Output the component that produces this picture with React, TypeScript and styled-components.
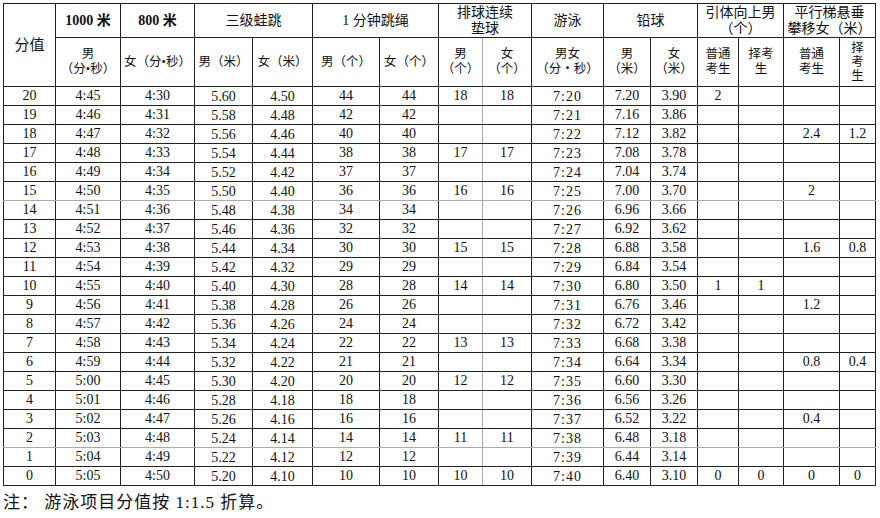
import React from "react";
import styled, { createGlobalStyle } from "styled-components";

const GlobalStyle = createGlobalStyle`
  html, body { margin: 0; padding: 0; background: #fff; }
  body { font-family: "Liberation Serif", "Noto Sans CJK SC", serif; color: #111; }
`;

const Page = styled.div`
  padding: 3px 0 0 3px;
  width: 880px;
  box-sizing: border-box;
`;

const Table = styled.table`
  border-collapse: collapse;
  table-layout: fixed;
  width: 872px;
  border-top: 1px solid #888;
  border-left: 1px solid #777;
  border-right: 1px solid #444;
`;

const HeadRow = styled.tr<{ $h: number }>`
  height: ${(p) => p.$h}px;
`;

const HeadCell = styled.th<{ $size?: number; $bold?: boolean; $lh?: number; $grayRight?: boolean }>`
  border: 1px solid #222;
  ${(p) => (p.$grayRight ? "border-right-color: #aaa;" : "")}
  padding: 0;
  font-size: ${(p) => p.$size ?? 14}px;
  font-weight: ${(p) => (p.$bold ? 700 : 400)};
  line-height: ${(p) => p.$lh ?? 15}px;
  text-align: center;
  vertical-align: middle;
  white-space: pre-line;
  font-family: "Liberation Serif", "Noto Sans CJK SC", serif;
`;

const DataRow = styled.tr<{ $gray?: boolean }>`
  height: 18.76px;
  & > td {
    border-bottom-color: ${(p) => (p.$gray ? "#aaa" : "#222")};
  }
`;

const Cell = styled.td<{ $low?: boolean; $spaced?: boolean; $grayRight?: boolean }>`
  border: 1px solid #222;
  ${(p) => (p.$grayRight ? "border-right-color: #aaa !important;" : "")}
  padding: ${(p) => (p.$low ? "2px 0 0 0" : "0")};
  font-size: 14px;
  line-height: 16px;
  text-align: center;
  vertical-align: middle;
  letter-spacing: ${(p) => (p.$spaced ? "1px" : "0")};
`;

const Note = styled.p`
  margin: 6px 0 0 0;
  font-size: 17px;
  letter-spacing: 1px;
  line-height: 22px;
  font-family: "Liberation Serif", "Noto Sans CJK SC", serif;
`;

const widths = [52, 65, 74, 58, 60, 67, 59, 44, 49, 72, 47, 47, 41, 45, 56, 36];

const pad = (n: number) => (n < 10 ? "0" + n : String(n));
const shotM = [
  "7.20", "7.16", "7.12", "7.08", "7.04", "7.00", "6.96", "6.92", "6.88", "6.84", "6.80",
  "6.76", "6.72", "6.68", "6.64", "6.60", "6.56", "6.52", "6.48", "6.44", "6.40",
];
const shotF = [
  "3.90", "3.86", "3.82", "3.78", "3.74", "3.70", "3.66", "3.62", "3.58", "3.54", "3.50",
  "3.46", "3.42", "3.38", "3.34", "3.30", "3.26", "3.22", "3.18", "3.14", "3.10",
];
const rope = [44, 42, 40, 38, 37, 36, 34, 32, 30, 29, 28, 26, 24, 22, 21, 20, 18, 16, 14, 12, 10];
const volley: Record<number, string> = { 20: "18", 17: "17", 15: "16", 12: "15", 10: "14", 7: "13", 5: "12", 2: "11", 0: "10" };
const pullN: Record<number, string> = { 20: "2", 10: "1", 0: "0" };
const pullS: Record<number, string> = { 10: "1", 0: "0" };
const barN: Record<number, string> = { 18: "2.4", 15: "2", 12: "1.6", 9: "1.2", 6: "0.8", 3: "0.4", 0: "0" };
const barS: Record<number, string> = { 18: "1.2", 12: "0.8", 6: "0.4", 0: "0" };

type Row = { score: number; cells: string[] };

const rows: Row[] = Array.from({ length: 21 }, (_, i) => {
  const score = 20 - i;
  const jumpM = (5.6 - i * 0.02).toFixed(2);
  const jumpF = (4.5 - i * 0.02).toFixed(2);
  return {
    score,
    cells: [
      String(score),
      `${Math.floor((45 + i) / 60) + 4}:${pad((45 + i) % 60)}`,
      `4:${pad(30 + i)}`,
      jumpM,
      jumpF,
      String(rope[i]),
      String(rope[i]),
      volley[score] ?? "",
      volley[score] ?? "",
      `7:${pad(20 + i)}`,
      shotM[i],
      shotF[i],
      pullN[score] ?? "",
      pullS[score] ?? "",
      barN[score] ?? "",
      barS[score] ?? "",
    ],
  };
});

const grayRows = new Set([15, 2]);

export default function App() {
  return (
    <>
      <GlobalStyle />
      <Page>
        <Table>
          <colgroup>
            {widths.map((w, i) => (
              <col key={i} style={{ width: w }} />
            ))}
          </colgroup>
          <thead>
            <HeadRow $h={34}>
              <HeadCell rowSpan={2} $size={15}>分值</HeadCell>
              <HeadCell $bold>1000 米</HeadCell>
              <HeadCell $bold>800 米</HeadCell>
              <HeadCell colSpan={2}>三级蛙跳</HeadCell>
              <HeadCell colSpan={2}>1 分钟跳绳</HeadCell>
              <HeadCell colSpan={2} $lh={16}>{"排球连续\n垫球"}</HeadCell>
              <HeadCell>游泳</HeadCell>
              <HeadCell colSpan={2}>铅球</HeadCell>
              <HeadCell colSpan={2} $lh={16}>{"引体向上男\n（个）"}</HeadCell>
              <HeadCell colSpan={2} $lh={16}>{"平行梯悬垂\n攀移女（米）"}</HeadCell>
            </HeadRow>
            <HeadRow $h={49}>
              <HeadCell $size={12.5}>{"男\n（分•秒）"}</HeadCell>
              <HeadCell $size={12.5}>女（分•秒）</HeadCell>
              <HeadCell $size={12.5}>男（米）</HeadCell>
              <HeadCell $size={12.5}>女（米）</HeadCell>
              <HeadCell $size={12.5}>男（个）</HeadCell>
              <HeadCell $size={12.5}>女（个）</HeadCell>
              <HeadCell $size={12.5} $grayRight>{"男\n（个）"}</HeadCell>
              <HeadCell $size={12.5}>{"女\n（个）"}</HeadCell>
              <HeadCell $size={12.5}>{"男女\n（分・秒）"}</HeadCell>
              <HeadCell $size={12.5}>{"男\n（米）"}</HeadCell>
              <HeadCell $size={12.5}>{"女\n（米）"}</HeadCell>
              <HeadCell $size={12.5}>{"普通\n考生"}</HeadCell>
              <HeadCell $size={12.5}>{"择考\n生"}</HeadCell>
              <HeadCell $size={12.5}>{"普通\n考生"}</HeadCell>
              <HeadCell $size={12.5} $lh={14}>{"择\n考\n生"}</HeadCell>
            </HeadRow>
          </thead>
          <tbody>
            {rows.map((r) => (
              <DataRow key={r.score} $gray={grayRows.has(r.score)}>
                {r.cells.map((c, j) => (
                  <Cell key={j} $low={j === 3 || j === 4 || j === 9} $spaced={j === 9} $grayRight={j === 7}>
                    {c}
                  </Cell>
                ))}
              </DataRow>
            ))}
          </tbody>
        </Table>
        <Note>注： 游泳项目分值按 1:1.5 折算。</Note>
      </Page>
    </>
  );
}
